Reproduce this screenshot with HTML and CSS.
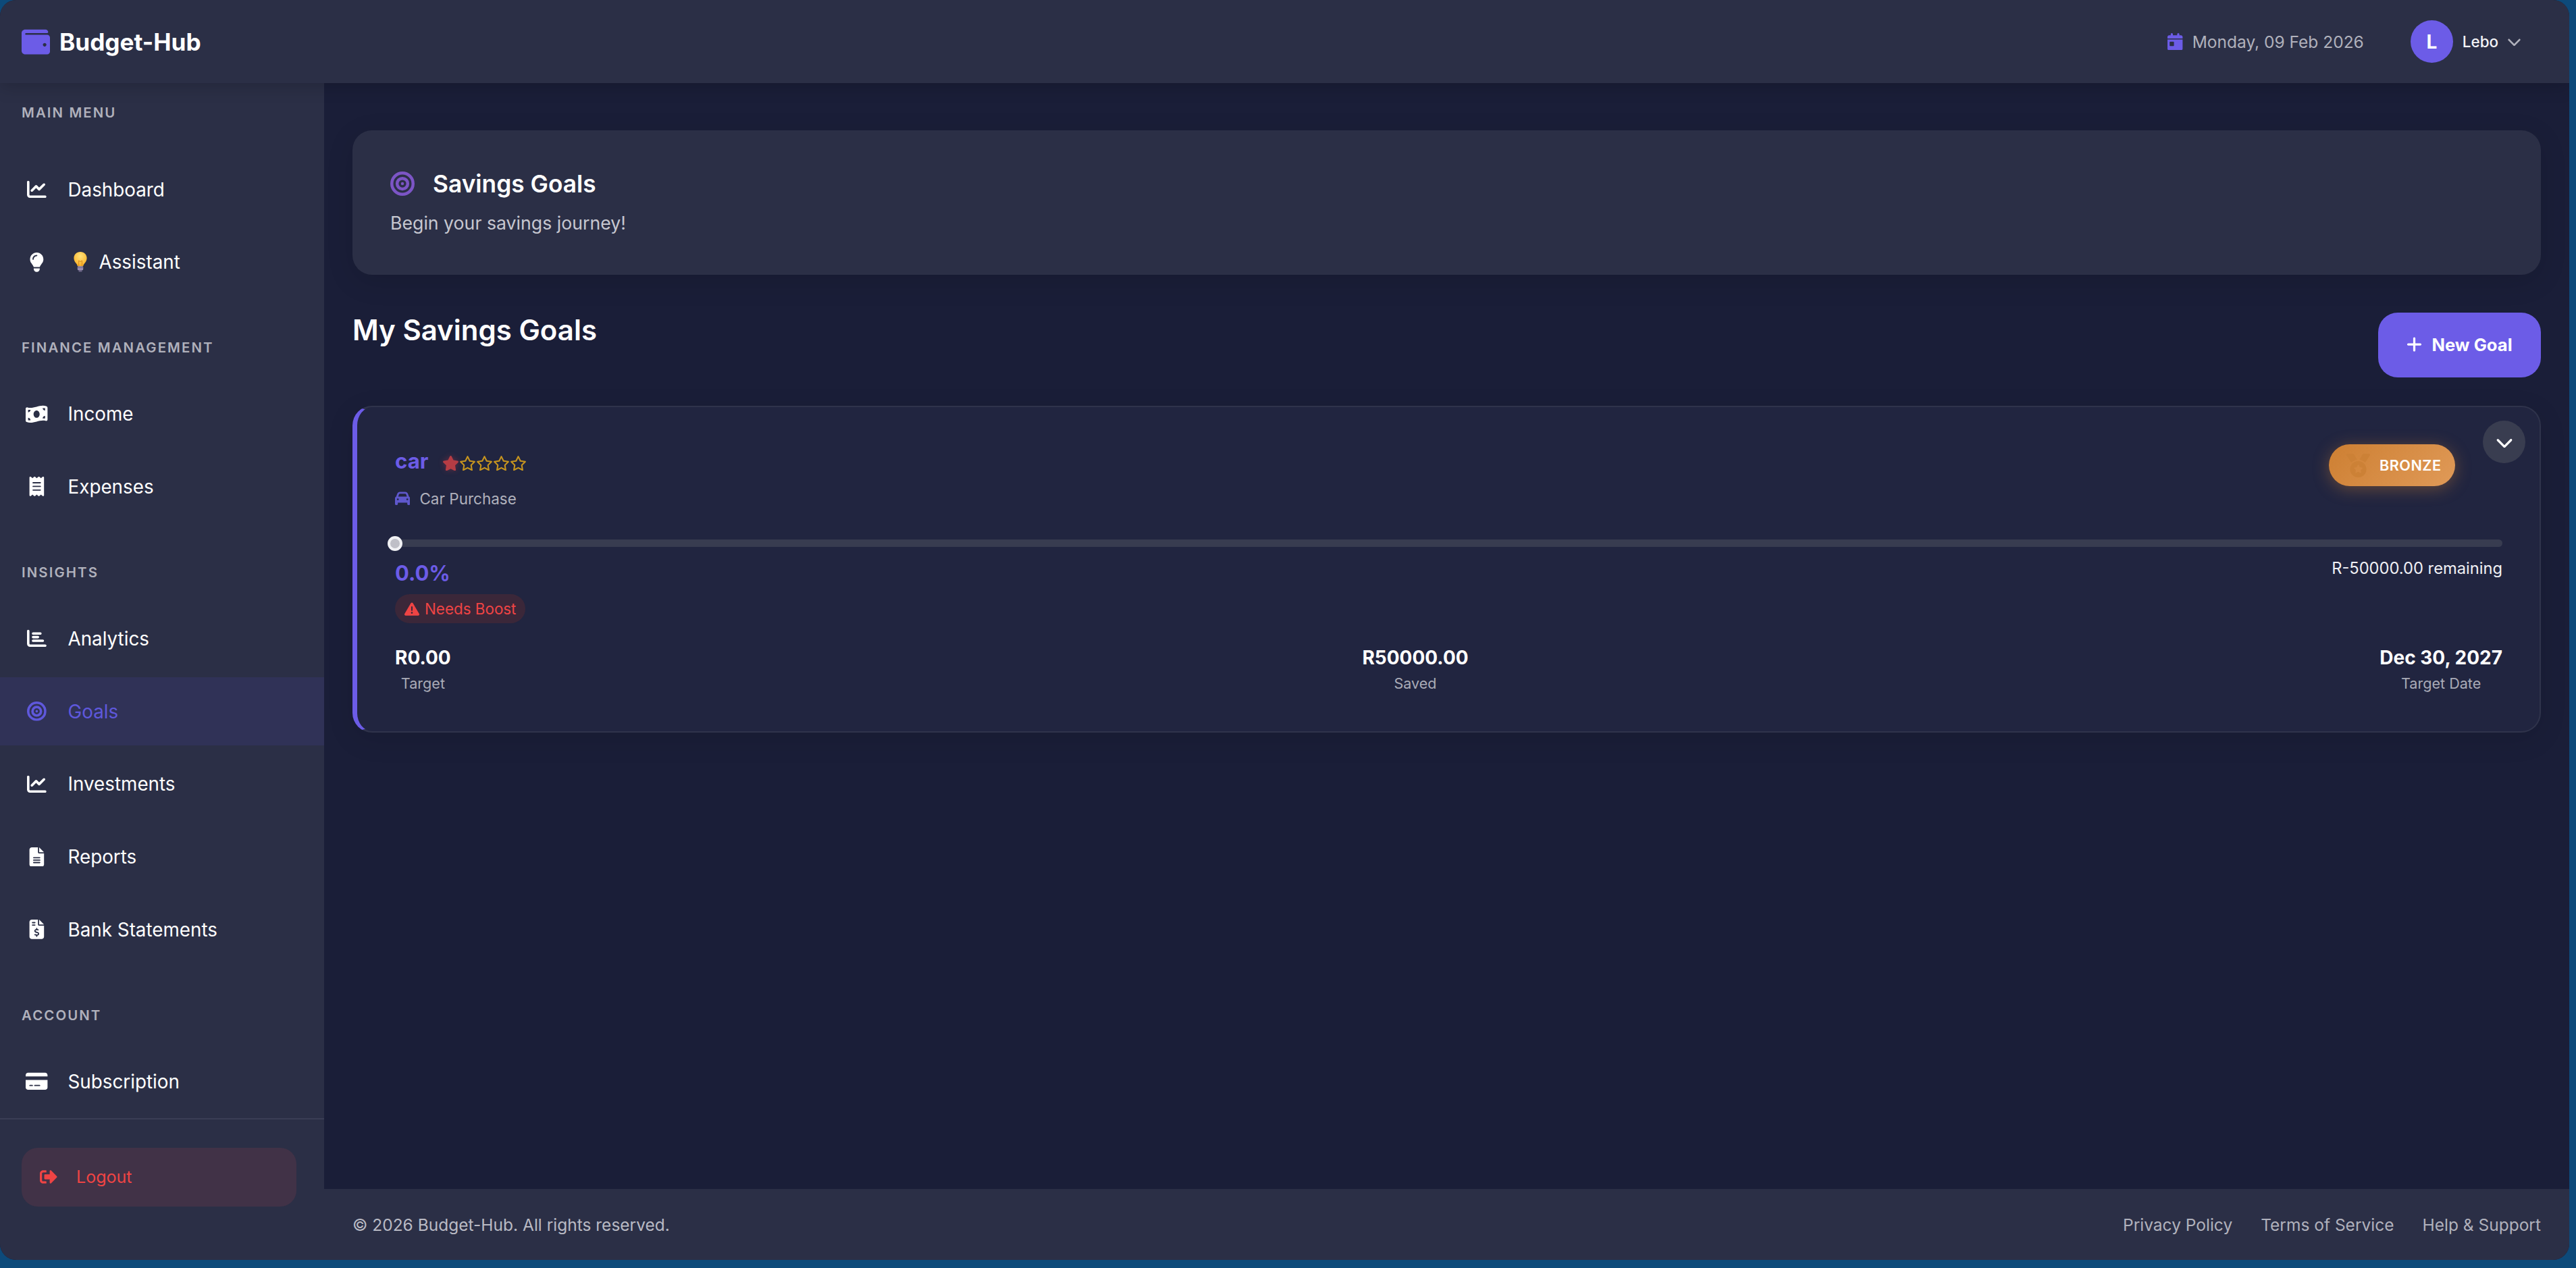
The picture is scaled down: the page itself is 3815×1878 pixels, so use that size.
FILE: index.html
```html
<!DOCTYPE html>
<html lang="en">
<head>
<meta charset="utf-8">
<title>Budget-Hub</title>
<link rel="stylesheet" href="styles.css">
</head>
<body>
<svg class="defs" aria-hidden="true">
  <symbol id="i-chart" viewBox="0 0 512 512"><path d="M64 64c0-17.7-14.3-32-32-32S0 46.3 0 64V400c0 44.2 35.8 80 80 80H480c17.7 0 32-14.3 32-32s-14.3-32-32-32H80c-8.8 0-16-7.2-16-16V64zm406.6 86.6c12.5-12.5 12.5-32.8 0-45.3s-32.8-12.5-45.3 0L320 210.7l-57.4-57.4c-12.5-12.5-32.8-12.5-45.3 0l-112 112c-12.5 12.5-12.5 32.8 0 45.3s32.8 12.5 45.3 0L240 221.3l57.4 57.4c12.5 12.5 32.8 12.5 45.3 0l128-128z"/></symbol>
  <symbol id="i-bullseye" viewBox="0 0 512 512"><path d="M448 256A192 192 0 1 0 64 256a192 192 0 1 0 384 0zM0 256a256 256 0 1 1 512 0A256 256 0 1 1 0 256zm256 80a80 80 0 1 0 0-160 80 80 0 1 0 0 160zm0-224a144 144 0 1 1 0 288 144 144 0 1 1 0-288zM224 256a32 32 0 1 1 64 0 32 32 0 1 1 -64 0z"/></symbol>
  <symbol id="i-star" viewBox="0 0 576 512"><path d="M316.9 18C311.6 7 300.4 0 288.1 0s-23.4 7-28.8 18L195 150.3 51.4 171.5c-12 1.8-22 10.2-25.7 21.7s-.7 24.2 7.9 32.7L137.8 329 113.2 474.7c-2 12 3 24.2 12.9 31.3s23 8 33.8 2.3l128.3-68.5 128.3 68.5c10.8 5.7 23.9 4.9 33.8-2.3s14.9-19.3 12.9-31.3L438.5 329 542.7 225.9c8.6-8.5 11.7-21.2 7.9-32.7s-13.7-19.9-25.7-21.7L381.2 150.3 316.9 18z"/></symbol>
  <symbol id="i-star-o" viewBox="0 0 576 512"><path d="M287.9 0c9.2 0 17.6 5.2 21.6 13.5l68.6 141.3 153.2 22.6c9 1.3 16.5 7.6 19.3 16.3s.5 18.1-5.9 24.5L433.6 328.4l26.2 155.6c1.5 9-2.2 18.1-9.6 23.5s-17.3 6-25.3 1.7l-137-73.2L151 509.1c-8.1 4.3-17.9 3.7-25.3-1.7s-11.2-14.5-9.7-23.5l26.2-155.6L31.1 218.2c-6.5-6.4-8.7-15.9-5.9-24.5s10.3-14.9 19.3-16.3l153.2-22.6L266.3 13.5C270.4 5.2 278.7 0 287.9 0zm0 79L235.4 187.2c-3.5 7.1-10.2 12.1-18.1 13.3L99 217.9 184.9 303c5.5 5.5 8.1 13.3 6.8 21L171.4 443.7l105.2-56.2c7.1-3.8 15.6-3.8 22.6 0l105.2 56.2L384.2 324.1c-1.3-7.7 1.2-15.5 6.8-21l85.9-85.1L358.6 200.5c-7.8-1.2-14.6-6.1-18.1-13.3L287.9 79z"/></symbol>
  <symbol id="i-chev" viewBox="0 0 512 512"><path d="M233.4 406.6c12.5 12.5 32.8 12.5 45.3 0l192-192c12.5-12.5 12.5-32.8 0-45.3s-32.8-12.5-45.3 0L256 338.7 86.6 169.4c-12.5-12.5-32.8-12.5-45.3 0s-12.5 32.8 0 45.3l192 192z"/></symbol>
</svg>
<div class="frame">
  <header class="topbar">
    <div class="brand">
      <svg class="brand-icon" viewBox="0 0 512 512"><path d="M461.2 128H80c-8.84 0-16-7.16-16-16s7.16-16 16-16h384c8.84 0 16-7.16 16-16 0-26.51-21.49-48-48-48H64C28.65 32 0 60.65 0 96v320c0 35.35 28.65 64 64 64h397.2c28.02 0 50.8-21.53 50.8-48V176c0-26.47-22.78-48-50.8-48zM416 340c-17.67 0-32-14.33-32-32s14.33-32 32-32 32 14.33 32 32-14.33 32-32 32z"/></svg>
      <span class="brand-name">Budget-Hub</span>
    </div>
    <div class="top-right">
      <div class="date">
        <svg class="date-icon" viewBox="0 0 448 512"><path d="M128 0c17.7 0 32 14.3 32 32V64H288V32c0-17.7 14.3-32 32-32s32 14.3 32 32V64h48c26.5 0 48 21.5 48 48v48H0V112C0 85.5 21.5 64 48 64H96V32c0-17.7 14.3-32 32-32zM0 192H448V464c0 26.5-21.5 48-48 48H48c-26.5 0-48-21.5-48-48V192zm80 64c-8.8 0-16 7.2-16 16v96c0 8.8 7.2 16 16 16h96c8.8 0 16-7.2 16-16V272c0-8.8-7.2-16-16-16H80z"/></svg>
        <span>Monday, 09 Feb 2026</span>
      </div>
      <div class="user">
        <span class="avatar">L</span>
        <span class="user-name">Lebo</span>
        <svg class="user-chev"><use href="#i-chev"/></svg>
      </div>
    </div>
  </header>
  <div class="body">
    <aside class="sidebar">
      <nav class="nav">
        <div class="nav-label nav-label-first">MAIN MENU</div>
        <a class="nav-item"><span class="nav-icon"><svg class="ic"><use href="#i-chart"/></svg></span><span>Dashboard</span></a>
        <a class="nav-item"><span class="nav-icon"><svg class="ic" viewBox="0 0 384 512"><path d="M272 384c9.6-31.9 29.5-59.1 49.2-86.2c0 0 0 0 0 0c5.2-7.1 10.4-14.2 15.4-21.4c19.8-28.5 31.4-63 31.4-100.3C368 78.8 289.2 0 192 0S16 78.8 16 176c0 37.3 11.6 71.9 31.4 100.3c5 7.2 10.2 14.3 15.4 21.4c0 0 0 0 0 0c19.8 27.1 39.7 54.4 49.2 86.2H272zM192 512c44.2 0 80-35.8 80-80V416H112v16c0 44.2 35.8 80 80 80zM112 176c0 8.8-7.2 16-16 16s-16-7.2-16-16c0-61.9 50.1-112 112-112c8.8 0 16 7.2 16 16s-7.2 16-16 16c-44.2 0-80 35.8-80 80z"/></svg></span>
          <svg class="emoji" viewBox="0 0 20 30"><defs><radialGradient id="bulb" cx="50%" cy="30%" r="65%"><stop offset="0" stop-color="#ffe27a"/><stop offset="1" stop-color="#fbb32a"/></radialGradient></defs><path fill="url(#bulb)" d="M10 0c5.5 0 9.6 4.2 9.6 9.3 0 3.4-1.7 5.7-3.3 7.8-1 1.4-1.9 2.7-2.1 4.1H5.8c-.2-1.4-1.100-2.700-2.100-4.100C2.100 15 .4 12.700.4 9.300.4 4.200 4.500 0 10 0z"/><path fill="none" stroke="#d98a1e" stroke-width="1" d="M7.600 21V13l2.400 1.600L12.400 13v8"/><rect x="5.800" y="21.200" width="8.400" height="6" rx="1.500" fill="#9a8fb0"/><rect x="5.800" y="23" width="8.400" height="1" fill="#6f6788"/><rect x="7.500" y="27" width="5" height="2.600" rx="1.200" fill="#6f6788"/></svg><span>Assistant</span></a>

        <div class="nav-label">FINANCE MANAGEMENT</div>
        <a class="nav-item"><span class="nav-icon"><svg class="ic ic-wide" viewBox="0 0 576 512"><path d="M0 112.500V422.300c0 18 10.100 35 27 41.300c87 32.500 174 10.300 261-11.900c79.800-20.300 159.600-40.700 239.300-18.900c23 6.300 48.700-9.500 48.700-33.400V89.700c0-18-10.100-35-27-41.300C462 15.900 375 38.100 288 60.300C208.200 80.600 128.400 100.900 48.700 79.100C25.600 72.800 0 88.600 0 112.500zM288 352c-44.200 0-80-43-80-96s35.800-96 80-96s80 43 80 96s-35.800 96-80 96zM64 352c35.300 0 64 28.700 64 64H64V352zm64-208c0 35.300-28.700 64-64 64V144h64zM512 304v64H448c0-35.300 28.700-64 64-64zM448 96h64v64c-35.300 0-64-28.700-64-64z"/></svg></span><span>Income</span></a>
        <a class="nav-item"><span class="nav-icon"><svg class="ic" viewBox="0 0 384 512"><path d="M14 2.200C22.500-1.700 32.500-.3 39.600 5.800L80 40.400 120.400 5.800c9-7.700 22.300-7.700 31.200 0L192 40.400 232.400 5.800c9-7.700 22.300-7.700 31.200 0L304 40.400 344.400 5.800c7.100-6.100 17.100-7.500 25.600-3.600s14 12.400 14 21.800V488c0 9.400-5.500 17.900-14 21.800s-18.500 2.500-25.600-3.600L304 471.600l-40.400 34.600c-9 7.700-22.300 7.700-31.200 0L192 471.600l-40.400 34.600c-9 7.700-22.300 7.700-31.200 0L80 471.600 39.600 506.200c-7.100 6.100-17.100 7.500-25.600 3.600S0 497.400 0 488V24C0 14.600 5.500 6.100 14 2.200zM96 144c-8.800 0-16 7.200-16 16s7.200 16 16 16H288c8.800 0 16-7.200 16-16s-7.200-16-16-16H96zM80 352c0 8.800 7.200 16 16 16H288c8.800 0 16-7.200 16-16s-7.200-16-16-16H96c-8.800 0-16 7.200-16 16zM96 240c-8.800 0-16 7.200-16 16s7.200 16 16 16H288c8.800 0 16-7.200 16-16s-7.200-16-16-16H96z"/></svg></span><span>Expenses</span></a>

        <div class="nav-label">INSIGHTS</div>
        <a class="nav-item"><span class="nav-icon"><svg class="ic" viewBox="0 0 512 512"><path d="M32 32c17.700 0 32 14.300 32 32V400c0 8.800 7.200 16 16 16H480c17.700 0 32 14.300 32 32s-14.300 32-32 32H80c-44.200 0-80-35.800-80-80V64C0 46.300 14.300 32 32 32zm96 96c0-17.700 14.300-32 32-32l192 0c17.700 0 32 14.300 32 32s-14.300 32-32 32l-192 0c-17.700 0-32-14.300-32-32zm32 64H288c17.700 0 32 14.300 32 32s-14.300 32-32 32H160c-17.700 0-32-14.300-32-32s14.300-32 32-32zm0 96H416c17.700 0 32 14.300 32 32s-14.300 32-32 32H160c-17.700 0-32-14.300-32-32s14.300-32 32-32z"/></svg></span><span>Analytics</span></a>
        <a class="nav-item nav-item-active"><span class="nav-icon"><svg class="ic"><use href="#i-bullseye"/></svg></span><span>Goals</span></a>
        <a class="nav-item"><span class="nav-icon"><svg class="ic"><use href="#i-chart"/></svg></span><span>Investments</span></a>
        <a class="nav-item"><span class="nav-icon"><svg class="ic" viewBox="0 0 384 512"><path d="M64 0C28.700 0 0 28.700 0 64V448c0 35.300 28.700 64 64 64H320c35.300 0 64-28.700 64-64V160H256c-17.700 0-32-14.300-32-32V0H64zM256 0V128H384L256 0zM112 256H272c8.800 0 16 7.200 16 16s-7.200 16-16 16H112c-8.800 0-16-7.200-16-16s7.200-16 16-16zm0 64H272c8.800 0 16 7.200 16 16s-7.200 16-16 16H112c-8.800 0-16-7.200-16-16s7.200-16 16-16zm0 64H272c8.800 0 16 7.200 16 16s-7.200 16-16 16H112c-8.800 0-16-7.200-16-16s7.200-16 16-16z"/></svg></span><span>Reports</span></a>
        <a class="nav-item"><span class="nav-icon"><svg class="ic" viewBox="0 0 384 512"><path d="M64 0C28.700 0 0 28.700 0 64V448c0 35.300 28.700 64 64 64H320c35.300 0 64-28.700 64-64V160H256c-17.700 0-32-14.300-32-32V0H64zM256 0V128H384L256 0zM64 80c0-8.800 7.200-16 16-16h64c8.800 0 16 7.200 16 16s-7.200 16-16 16H80c-8.800 0-16-7.200-16-16zm0 64c0-8.800 7.200-16 16-16h64c8.800 0 16 7.200 16 16s-7.200 16-16 16H80c-8.800 0-16-7.200-16-16zm128 72c8.800 0 16 7.200 16 16v17.300c8.500 1.200 16.700 3.100 24.100 5.100c8.500 2.300 13.600 11 11.300 19.600s-11 13.600-19.600 11.300c-11.100-3-22-5.200-32.100-5.300c-8.400-.1-17.400 1.800-23.600 5.500c-5.700 3.400-8.100 7.300-8.100 12.800c0 3.700 1.300 6.500 7.300 10.100c6.900 4.100 16.600 7.100 29.200 10.900l.5 .1 0 0 0 0c11.300 3.400 25.300 7.600 36.300 14.600c12.100 7.600 22.400 19.700 22.700 38.200c.3 19.300-9.600 33.300-22.900 41.600c-7.700 4.800-16.400 7.600-25.100 9.100V440c0 8.800-7.200 16-16 16s-16-7.200-16-16V422.200c-11.200-2.100-21.700-5.700-30.900-8.900l0 0c-2.100-.7-4.200-1.400-6.200-2.100c-8.400-2.800-12.900-11.900-10.100-20.200s11.900-12.900 20.200-10.100c2.500 .8 4.800 1.600 7.100 2.400l0 0 0 0 0 0c13.600 4.600 24.600 8.400 36.300 8.700c9.100 .3 17.900-1.700 23.700-5.300c5.100-3.200 7.900-7.300 7.800-14c-.1-4.600-1.800-7.800-7.700-11.600c-6.800-4.300-16.500-7.400-29-11.200l-1.600-.5 0 0c-11-3.300-24.300-7.300-34.800-13.700c-12-7.200-22.600-18.900-22.700-37.300c-.1-19.400 10.800-32.800 23.800-40.500c7.500-4.400 15.800-7.200 24.100-8.700V232c0-8.800 7.200-16 16-16z"/></svg></span><span>Bank Statements</span></a>

        <div class="nav-label">ACCOUNT</div>
        <a class="nav-item"><span class="nav-icon"><svg class="ic ic-wide" viewBox="0 0 576 512"><path d="M64 32C28.700 32 0 60.700 0 96v32H576V96c0-35.300-28.700-64-64-64H64zM576 224H0V416c0 35.300 28.700 64 64 64H512c35.300 0 64-28.700 64-64V224zM112 352h64c8.800 0 16 7.200 16 16s-7.200 16-16 16H112c-8.800 0-16-7.200-16-16s7.200-16 16-16zm112 16c0-8.800 7.200-16 16-16H368c8.800 0 16 7.200 16 16s-7.200 16-16 16H240c-8.800 0-16-7.200-16-16z"/></svg></span><span>Subscription</span></a>
      </nav>
      <div class="logout-wrap">
        <a class="logout">
          <svg class="logout-icon" viewBox="0 0 512 512"><path d="M497 273L329 441c-15 15-41 4.500-41-17v-96H152c-13.300 0-24-10.700-24-24v-96c0-13.300 10.700-24 24-24h136V88c0-21.400 25.900-32 41-17l168 168c9.300 9.400 9.300 24.600 0 34zM192 436v-40c0-6.600-5.400-12-12-12H96c-17.700 0-32-14.300-32-32V160c0-17.700 14.300-32 32-32h84c6.600 0 12-5.400 12-12V76c0-6.600-5.400-12-12-12H96c-53 0-96 43-96 96v192c0 53 43 96 96 96h84c6.600 0 12-5.400 12-12z"/></svg>
          <span>Logout</span>
        </a>
      </div>
    </aside>
    <div class="content">
      <main class="main">
        <section class="hero">
          <div class="hero-title">
            <svg class="hero-icon"><use href="#i-bullseye"/></svg>
            <h1>Savings Goals</h1>
          </div>
          <p class="hero-sub">Begin your savings journey!</p>
        </section>
        <div class="section-head">
          <h2>My Savings Goals</h2>
          <button class="btn-new">
            <svg class="btn-plus" viewBox="0 0 448 512"><path d="M256 80c0-17.700-14.300-32-32-32s-32 14.300-32 32V224H48c-17.700 0-32 14.300-32 32s14.300 32 32 32H192V432c0 17.700 14.300 32 32 32s32-14.300 32-32V288H400c17.700 0 32-14.300 32-32s-14.300-32-32-32H256V80z"/></svg>
            <span>New Goal</span>
          </button>
        </div>
        <article class="goal">
          <span class="toggle"><svg class="toggle-chev"><use href="#i-chev"/></svg></span>
          <div class="goal-head">
            <div class="goal-id">
              <div class="goal-name-row">
                <span class="goal-name">car</span>
                <span class="stars">
                  <svg class="star star-on"><use href="#i-star"/></svg>
                  <svg class="star"><use href="#i-star-o"/></svg>
                  <svg class="star"><use href="#i-star-o"/></svg>
                  <svg class="star"><use href="#i-star-o"/></svg>
                  <svg class="star"><use href="#i-star-o"/></svg>
                </span>
              </div>
              <div class="goal-cat">
                <svg class="car-icon" viewBox="0 0 512 512"><path d="M135.200 117.400L109.100 192H402.900l-26.100-74.600C372.300 104.600 360.200 96 346.600 96H165.400c-13.600 0-25.700 8.600-30.200 21.400zM39.600 196.800L74.800 96.300C88.300 57.800 124.600 32 165.400 32H346.600c40.800 0 77.100 25.800 90.600 64.300l35.200 100.500c23.200 9.600 39.600 32.500 39.600 59.200V400v48c0 17.700-14.300 32-32 32H448c-17.700 0-32-14.300-32-32V400H96v48c0 17.700-14.300 32-32 32H32c-17.700 0-32-14.300-32-32V400 256c0-26.700 16.400-49.600 39.600-59.200zM128 288a32 32 0 1 0 -64 0 32 32 0 1 0 64 0zm288 32a32 32 0 1 0 0-64 32 32 0 1 0 0 64z"/></svg>
                <span>Car Purchase</span>
              </div>
            </div>
            <span class="badge">
              <svg class="medal" viewBox="0 0 512 512"><path d="M4.100 38.200C1.400 34.200 0 29.400 0 24.600C0 11 11 0 24.600 0H133.900c11.200 0 21.700 5.900 27.400 15.500l68.500 114.100c-48.200 6.100-91.300 28.600-123.400 61.900L4.100 38.200zm503.700 0L405.600 191.500c-32.100-33.300-75.200-55.800-123.400-61.900L350.700 15.500C356.500 5.900 366.900 0 378.100 0H487.400C501 0 512 11 512 24.600c0 4.800-1.400 9.600-4.100 13.600zM80 336a176 176 0 1 1 352 0A176 176 0 1 1 80 336zm184.400-94.900c-3.400-7-13.300-7-16.800 0l-22.400 45.400c-1.400 2.800-4 4.700-7 5.100L168 298.900c-7.700 1.100-10.700 10.500-5.200 16l36.300 35.400c2.200 2.200 3.200 5.200 2.700 8.300l-8.600 49.900c-1.300 7.600 6.700 13.500 13.600 9.900l44.800-23.600c2.700-1.400 6-1.400 8.700 0l44.800 23.600c6.900 3.600 14.900-2.200 13.600-9.900l-8.600-49.900c-.5-3 .5-6.100 2.700-8.300l36.300-35.400c5.600-5.400 2.500-14.800-5.200-16l-50.100-7.300c-3-.4-5.700-2.400-7-5.100l-22.400-45.400z"/></svg>
              <span>BRONZE</span>
            </span>
          </div>
          <div class="track"><span class="thumb"></span></div>
          <div class="progress-row">
            <div class="progress-left">
              <div class="percent">0.0%</div>
              <span class="boost">
                <svg class="boost-icon" viewBox="0 0 512 512"><path d="M256 32c14.200 0 27.300 7.500 34.500 19.800l216 368c7.300 12.400 7.300 27.700 .2 40.100S486.300 480 472 480H40c-14.300 0-27.600-7.700-34.700-20.100s-7-27.800 .2-40.100l216-368C228.700 39.500 241.800 32 256 32zm0 128c-13.300 0-24 10.700-24 24V296c0 13.300 10.700 24 24 24s24-10.700 24-24V184c0-13.300-10.700-24-24-24zm32 224a32 32 0 1 0 -64 0 32 32 0 1 0 64 0z"/></svg>
                <span>Needs Boost</span>
              </span>
            </div>
            <div class="remaining">R-50000.00 remaining</div>
          </div>
          <div class="stats">
            <div class="stat"><div class="stat-value">R0.00</div><div class="stat-label">Target</div></div>
            <div class="stat"><div class="stat-value">R50000.00</div><div class="stat-label">Saved</div></div>
            <div class="stat"><div class="stat-value">Dec 30, 2027</div><div class="stat-label">Target Date</div></div>
          </div>
        </article>
      </main>
      <footer class="footer">
        <span>© 2026 Budget-Hub. All rights reserved.</span>
        <div class="footer-links">
          <a>Privacy Policy</a>
          <a>Terms of Service</a>
          <a>Help &amp; Support</a>
        </div>
      </footer>
    </div>
  </div>
</div>
</body>
</html>
```
FILE: styles.css
```css
* { box-sizing: border-box; }
html, body { margin: 0; height: 100%; }
body {
  background: #0d4a7a;
  font-family: "Inter", "Noto Sans", sans-serif;
  color: #fff;
  padding: 0 10px 12px 0;
  overflow: hidden;
}
svg { fill: currentColor; display: block; }
.defs { width: 0; height: 0; position: absolute; }
.frame {
  height: 1866px;
  border-radius: 24px;
  overflow: hidden;
  background: #1a1e38;
  display: flex;
  flex-direction: column;
}

/* top bar */
.topbar {
  height: 123px;
  flex: none;
  background: #2b2f46;
  display: flex;
  align-items: center;
  justify-content: space-between;
  padding: 0 71px 0 32px;
  box-shadow: 0 5px 24px rgba(0, 0, 0, .18);
  position: relative;
  z-index: 2;
}
.brand { display: flex; align-items: center; gap: 14px; }
.brand-icon { width: 42px; height: 42px; color: #6c5ce7; }
.brand-name { font-size: 35.2px; font-weight: 700; }
.top-right { display: flex; align-items: center; }
.date { display: flex; align-items: center; gap: 14px; font-size: 24.5px; color: #b0b1bc; margin-right: 69px; }
.date-icon { width: 22.4px; height: 25.6px; color: #6c5ce7; }
.user { display: flex; align-items: center; }
.avatar {
  width: 63px; height: 63px;
  border-radius: 50%;
  background: #6c5ce7;
  display: flex; align-items: center; justify-content: center;
  font-size: 28px; font-weight: 700;
}
.user-name { font-size: 22.4px; font-weight: 500; margin-left: 14px; color: #f3f3f6; }
.user-chev { width: 21px; height: 21px; color: #b0b1bc; margin-left: 13px; }

/* layout */
.body { flex: 1; display: flex; min-height: 0; }
.sidebar {
  width: 480px;
  flex: none;
  background: #2b2f46;
  display: flex;
  flex-direction: column;
}
.nav { flex: 1; min-height: 0; }
.nav-label {
  font-size: 20.4px;
  font-weight: 600;
  line-height: 30px;
  letter-spacing: 2.1px;
  color: #b0b1bc;
  padding-left: 32px;
  margin: 61.5px 0 32.5px;
}
.nav-label-first { margin: 29px 0 48px; }
.nav-item {
  display: flex;
  align-items: center;
  height: 101px;
  margin-bottom: 6.7px;
  padding-left: 40px;
  font-size: 27.8px;
  color: #fff;
}
.nav-item-active { background: #303257; color: #5f58dc; }
.nav-icon { width: 29px; margin-right: 31.5px; display: flex; justify-content: center; flex: none; }
.ic { width: 28.8px; height: 28.8px; flex: none; }
.ic-wide { width: 32.4px; }
.emoji { width: 20px; height: 30px; margin: 0 18px 0 8px; flex: none; }
.logout-wrap { border-top: 2px solid #3a3d55; padding: 42px 41px 79px 32px; }
.logout {
  display: flex;
  align-items: center;
  height: 87px;
  padding: 0 0 2px 27px;
  gap: 28px;
  border-radius: 24px;
  background: #413247;
  color: #ef4444;
  font-size: 25px;
}
.logout-icon { width: 26px; height: 26px; }

/* content */
.content { flex: 1; min-width: 0; display: flex; flex-direction: column; }
.main { flex: 1; padding: 70px 42px 0; min-height: 0; }
.hero {
  height: 214px;
  background: #2b2f46;
  border-radius: 29px;
  padding: 56px 56px 0;
  box-shadow: 0 10px 40px rgba(0, 0, 0, .12);
}
.hero-title { display: flex; align-items: center; gap: 27px; height: 46px; }
.hero-icon { width: 36px; height: 36px; color: #7c55c6; }
.hero-title h1 { margin: 0; font-size: 35.3px; font-weight: 600; }
.hero-sub { margin: 14px 0 0; font-size: 26.7px; line-height: 42px; color: #c6c7d0; }
.section-head { display: flex; justify-content: space-between; align-items: flex-start; margin-top: 56px; }
.section-head h2 { margin: -2px 0 0; font-size: 42px; font-weight: 600; line-height: 56px; }
.btn-new {
  width: 241px; height: 96px;
  border: 0;
  border-radius: 29px;
  background: #6c5ce7;
  color: #fff;
  font: 700 25.6px "Inter", sans-serif;
  display: flex; align-items: center; justify-content: center;
  gap: 14px;
  padding: 0 0 2px;
}
.btn-plus { width: 23px; height: 26px; }
.goal {
  position: relative;
  height: 484px;
  margin-top: 42px;
  background: #212540;
  border: 2px solid #2f334b;
  border-left: 7px solid #6c5ce7;
  border-radius: 29px;
  padding: 58px 55px 0 56px;
  box-shadow: 0 10px 40px rgba(0, 0, 0, .1);
}
.toggle {
  position: absolute;
  top: 20px; right: 21px;
  width: 63px; height: 63px;
  border-radius: 50%;
  background: #393d50;
  display: flex; align-items: center; justify-content: center;
}
.toggle-chev { width: 26px; height: 26px; }
.goal-head { display: flex; justify-content: space-between; align-items: flex-start; }
.goal-name-row { display: flex; align-items: center; height: 44px; }
.goal-name { font-size: 31.2px; font-weight: 700; color: #6c5ce7; line-height: 44px; }
.stars { display: flex; margin-left: 21px; margin-top: 6px; }
.star { width: 25px; height: 22.4px; color: #c6941f; }
.star-on { color: #b53c44; filter: drop-shadow(0 0 4px rgba(220, 60, 70, .35)); }
.goal-cat { display: flex; align-items: center; gap: 14px; font-size: 22.5px; color: #b0b1bc; margin-top: 17.6px; height: 32px; }
.car-icon { width: 22.4px; height: 22.4px; color: #5f58cc; }
.badge {
  display: flex; align-items: center;
  width: 187px; height: 62px;
  margin: -3px 70px 0 0;
  padding-left: 26px;
  gap: 14px;
  border-radius: 31px;
  background: linear-gradient(135deg, #cd7f32, #e09a58);
  box-shadow: 0 4px 24px rgba(205, 127, 50, .4);
  font-size: 21.6px; font-weight: 600; letter-spacing: .5px;
}
.medal { width: 35px; height: 35px; color: #cc8136; }
.track {
  position: relative;
  height: 11px;
  margin-top: 44.5px;
  border-radius: 6px;
  background: #383c50;
}
.thumb {
  position: absolute;
  left: -11px; top: -5.5px;
  width: 22px; height: 22px;
  border-radius: 50%;
  background: #bfbfc7;
  border: 4px solid #f1f1f4;
}
.progress-row { display: flex; justify-content: space-between; margin-top: 19px; }
.percent { font-size: 31px; font-weight: 700; color: #6c5ce7; line-height: 40px; }
.remaining { font-size: 23.7px; line-height: 26px; color: #f0f0f4; }
.boost {
  display: inline-flex; align-items: center;
  height: 43px; margin-top: 11px;
  padding: 0 14px;
  gap: 8px;
  border-radius: 22px;
  background: #3b2739;
  color: #ef4444;
  font-size: 22.4px;
}
.boost-icon { width: 22px; height: 22px; }
.stats { display: flex; justify-content: space-between; margin-top: 29px; }
.stat { text-align: center; }
.stat-value { font-size: 28px; font-weight: 700; line-height: 44px; }
.stat-label { font-size: 21.6px; color: #a9abb7; line-height: 30px; margin-top: 1px; }

/* footer */
.footer {
  height: 105px;
  flex: none;
  background: #2b2f46;
  display: flex;
  align-items: center;
  justify-content: space-between;
  padding: 0 42px;
  font-size: 24.5px;
  color: #b9bac4;
}
.footer-links { display: flex; gap: 42px; color: #b0b1bc; }
```
